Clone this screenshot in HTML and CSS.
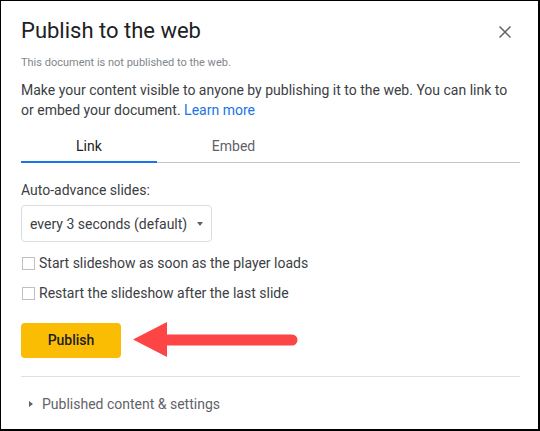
FILE: index.html
```html
<!DOCTYPE html>
<html>
<head>
<meta charset="utf-8">
<link rel="stylesheet" href="styles.css">
</head>
<body>
<div class="dialog">
  <div class="title-row">
    <h1 class="title">Publish to the web</h1>
    <svg class="close" width="12" height="12" viewBox="0 0 12 12"><path d="M0.5 0.5L11.5 11.5M11.5 0.5L0.5 11.5" stroke="#5f6368" stroke-width="1.5" fill="none"/></svg>
  </div>
  <p class="status">This document is not published to the web.</p>
  <p class="desc">Make your content visible to anyone by publishing it to the web. You can link to or embed your document. <a class="learn">Learn more</a></p>
  <div class="tabs">
    <div class="tab active">Link</div>
    <div class="tab">Embed</div>
  </div>
  <div class="label">Auto-advance slides:</div>
  <div class="select">
    <span>every 3 seconds (default)</span>
    <span class="caret"></span>
  </div>
  <label class="check first"><span class="box"></span>Start slideshow as soon as the player loads</label>
  <label class="check"><span class="box"></span>Restart the slideshow after the last slide</label>
  <div class="action-row">
    <button class="publish">Publish</button>
    <svg class="arrow" width="168" height="38" viewBox="0 0 168 38"><path d="M1 18.5L35 1V13.5H160A5.5 5.5 0 0 1 160 24.5H35V36Z" fill="#fe4545"/></svg>
  </div>
  <div class="divider"></div>
  <div class="more"><span class="tri"></span>Published content &amp; settings</div>
</div>
</body>
</html>
```

FILE: styles.css
```css
html, body {
  margin: 0;
  padding: 0;
  background: #fff;
}
.dialog {
  width: 540px;
  height: 431px;
  box-sizing: border-box;
  border-top: 1px solid #000;
  border-left: 1px solid #000;
  border-right: 2px solid #000;
  border-bottom: 2px solid #000;
  padding: 16px 18px 0 20px;
  font-family: Roboto, "Liberation Sans", sans-serif;
  color: #3c4043;
}
.title-row {
  display: flex;
  justify-content: space-between;
  align-items: center;
}
.title {
  margin: 0;
  font-size: 22px;
  line-height: 28px;
  font-weight: 400;
  color: #202124;
}
.close {
  margin-right: 9px;
  margin-top: 1px;
}
.status {
  margin: 10px 0 0;
  font-size: 11px;
  line-height: 16px;
  color: #80868b;
}
.desc {
  margin: 9px 0 0;
  font-size: 14px;
  line-height: 20px;
  color: #3c4043;
}
.learn {
  color: #1a73e8;
  text-decoration: none;
}
.tabs {
  display: flex;
  margin-top: 8px;
  border-bottom: 1px solid #c4c4c4;
}
.tab {
  padding: 8px 55px 5px;
  font-size: 14px;
  line-height: 20px;
  color: #5f6368;
  border-bottom: 2px solid transparent;
  margin-bottom: -1px;
}
.tab.active {
  color: #202124;
  border-bottom-color: #1a73e8;
}
.label {
  margin-top: 17px;
  font-size: 14px;
  line-height: 20px;
  color: #3c4043;
}
.select {
  margin-top: 5px;
  width: 191px;
  box-sizing: border-box;
  display: flex;
  align-items: center;
  justify-content: space-between;
  border: 1px solid #dadce0;
  border-radius: 4px;
  padding: 8px 8px 7px 8px;
  font-size: 14px;
  line-height: 20px;
  color: #3c4043;
}
.caret {
  width: 0;
  height: 0;
  border-left: 3.5px solid transparent;
  border-right: 3.5px solid transparent;
  border-top: 4px solid #5f6368;
}
.check {
  display: flex;
  align-items: center;
  margin-top: 10px;
  font-size: 14px;
  line-height: 20px;
  color: #3c4043;
}
.check.first {
  margin-top: 11px;
}
.box {
  width: 11px;
  height: 11px;
  border: 1px solid #c0c0c0;
  margin: 1px 4px 0 1px;
}
.action-row {
  display: flex;
  align-items: center;
  margin-top: 18px;
}
.publish {
  width: 100px;
  height: 35px;
  border: none;
  border-radius: 4px;
  background: #fbbc04;
  font-family: Roboto, "Liberation Sans", sans-serif;
  font-size: 14px;
  font-weight: 500;
  color: #202124;
  padding: 0;
}
.arrow {
  margin-left: 11px;
}
.divider {
  margin-top: 17px;
  height: 1px;
  background: #e0e0e0;
}
.more {
  display: flex;
  align-items: center;
  margin-top: 17px;
  font-size: 14px;
  line-height: 20px;
  color: #5f6368;
}
.tri {
  width: 0;
  height: 0;
  border-top: 3px solid transparent;
  border-bottom: 3px solid transparent;
  border-left: 4px solid #5f6368;
  margin: 0 9px 0 8px;
}
```
